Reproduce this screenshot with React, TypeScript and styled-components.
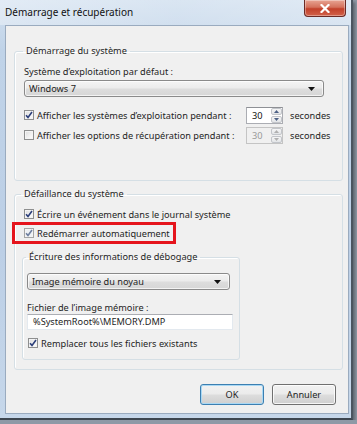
import React from 'react'
import styled, { createGlobalStyle } from 'styled-components'

const GlobalStyle = createGlobalStyle`
  html, body {
    margin: 0;
    padding: 0;
    background: #8e99a6;
  }
  body {
    font-family: "Noto Sans", "Open Sans", sans-serif;
    font-size: 9.2px;
    color: #1e1e1e;
  }
`

const Check = ({ checked, faded }: { checked?: boolean; faded?: boolean }) => (
  <CheckBox $faded={faded}>
    {checked && (
      <svg width="8" height="8" viewBox="0 0 8 8">
        <path d="M1 4.2 L3 6.4 L7 1" fill="none" stroke={faded ? '#6f7f9f' : '#2c3f7a'} strokeWidth="1.6" />
      </svg>
    )}
  </CheckBox>
)

const Spinner = ({ value, disabled }: { value: string; disabled?: boolean }) => (
  <SpinBox $disabled={disabled}>
    <SpinInput $disabled={disabled}>{value}</SpinInput>
    <SpinArrows>
      <SpinHalf>
        <svg width="5" height="3" viewBox="0 0 5 3"><path d="M0 3 L2.5 0 L5 3 Z" fill={disabled ? '#b0b0b0' : '#4d6185'} /></svg>
      </SpinHalf>
      <SpinHalf>
        <svg width="5" height="3" viewBox="0 0 5 3"><path d="M0 0 L2.5 3 L5 0 Z" fill={disabled ? '#b0b0b0' : '#4d6185'} /></svg>
      </SpinHalf>
    </SpinArrows>
  </SpinBox>
)

const Combo = ({ text, width }: { text: string; width: number }) => (
  <ComboBox style={{ width }}>
    <span>{text}</span>
    <svg width="7" height="4" viewBox="0 0 7 4"><path d="M0 0 L7 0 L3.5 4 Z" fill="#111" /></svg>
  </ComboBox>
)

export default function App() {
  return (
    <>
      <GlobalStyle />
      <Window>
        <TitleBar>
          <Title>Démarrage et récupération</Title>
          <CloseButton>
            <svg width="10" height="9" viewBox="0 0 10 9">
              <path d="M1.5 1 L8.5 8 M8.5 1 L1.5 8" stroke="#fff" strokeWidth="2.2" strokeLinecap="square" />
            </svg>
          </CloseButton>
        </TitleBar>
        <Client>
          <Group $pad="0 17px 36px 9px">
            <Legend>Démarrage du système</Legend>
            <Label $top={7}>Système d’exploitation par défaut :</Label>
            <Combo text="Windows 7" width={300} />
            <Row $top={9}>
              <Check checked />
              <RowText $w={209}>Afficher les systèmes d’exploitation pendant :</RowText>
              <Spinner value="30" />
              <Unit>secondes</Unit>
            </Row>
            <Row $top={2}>
              <Check />
              <RowText $w={209}>Afficher les options de récupération pendant :</RowText>
              <Spinner value="30" disabled />
              <Unit>secondes</Unit>
            </Row>
          </Group>

          <Group $pad="0 7px 9px 7px" $top={6}>
            <Legend>Défaillance du système</Legend>
            <Row $top={4} $left={2}>
              <Check checked />
              <RowText>Écrire un événement dans le journal système</RowText>
            </Row>
            <Highlight>
              <Row $top={0}>
                <Check checked faded />
                <RowText>Redémarrer automatiquement</RowText>
              </Row>
            </Highlight>
            <Group $pad="0 6px 7px 4px" $top={6}>
              <Legend>Écriture des informations de débogage</Legend>
              <ComboWrap>
                <Combo text="Image mémoire du noyau" width={203} />
              </ComboWrap>
              <Label $top={11}>Fichier de l’image mémoire :</Label>
              <TextInput>%SystemRoot%\MEMORY.DMP</TextInput>
              <Row $top={4} $left={1}>
                <Check checked />
                <RowText>Remplacer tous les fichiers existants</RowText>
              </Row>
            </Group>
          </Group>

          <ButtonBar>
            <Button $default>OK</Button>
            <Button>Annuler</Button>
          </ButtonBar>
        </Client>
      </Window>
    </>
  )
}

const Window = styled.div`
  width: 351px;
  height: 418px;
  display: flex;
  flex-direction: column;
  background: linear-gradient(180deg, #d3e1f0 0%, #c0d3e8 12%, #bccfe6 60%, #c6d7ea 100%);
  border-right: 2px solid #4b5560;
  border-bottom: 2px solid #3d4650;
  box-shadow: 2px 2px 3px rgba(0, 0, 0, 0.35);
`

const TitleBar = styled.div`
  height: 25px;
  display: flex;
  align-items: flex-start;
  justify-content: space-between;
  background: linear-gradient(90deg, rgba(255,255,255,0.35) 0%, rgba(255,255,255,0.15) 50%, rgba(255,255,255,0.3) 100%);
`

const Title = styled.div`
  margin: 5px 0 0 5px;
  font-size: 10px;
  line-height: 14px;
  color: #111;
  white-space: nowrap;
`

const CloseButton = styled.div`
  width: 40px;
  height: 16px;
  margin-right: 5px;
  display: flex;
  align-items: center;
  justify-content: center;
  border: 1px solid #6b2a25;
  border-top: none;
  border-radius: 0 0 4px 4px;
  background: linear-gradient(180deg, #e8a493 0%, #d4715c 45%, #c2402a 55%, #d2624a 100%);
  box-shadow: inset 0 0 0 1px rgba(255, 255, 255, 0.35);
`

const Client = styled.div`
  flex: 1;
  margin: 0 2px 4px 5px;
  display: flex;
  flex-direction: column;
  padding: 18px 5px 8px 8px;
  background: #f0f0f0;
  border: 1px solid #9aabbf;
`

const Group = styled.fieldset<{ $pad: string; $top?: number }>`
  margin: ${(p) => p.$top ?? 0}px 0 0 0;
  padding: ${(p) => p.$pad};
  display: flex;
  flex-direction: column;
  align-items: flex-start;
  border: 1px solid #d5dfe5;
  border-radius: 3px;
  box-shadow: inset 1px 1px 0 #fff;
  min-width: 0;
`

const Legend = styled.legend`
  padding: 0 3px;
  margin-left: -1px;
  line-height: 14px;
  white-space: nowrap;
`

const Label = styled.div<{ $top: number }>`
  margin-top: ${(p) => p.$top}px;
  line-height: 13px;
  height: 13px;
  white-space: nowrap;
`

const ComboWrap = styled.div`
  margin-top: 7px;
`

const ComboBox = styled.div`
  height: 17px;
  margin-top: 2px;
  box-sizing: border-box;
  display: flex;
  align-items: center;
  justify-content: space-between;
  padding: 0 8px 0 4px;
  border: 1px solid #8a8a8a;
  border-radius: 3px;
  background: linear-gradient(180deg, #f4f4f4 0%, #ebebeb 48%, #dddddd 52%, #d6d6d6 100%);
  box-shadow: inset 0 0 0 1px rgba(255, 255, 255, 0.7);
  white-space: nowrap;
`

const Row = styled.div<{ $top: number; $left?: number }>`
  margin-top: ${(p) => p.$top}px;
  margin-left: ${(p) => p.$left ?? 0}px;
  height: 18px;
  display: flex;
  align-items: center;
`

const CheckBox = styled.div<{ $faded?: boolean }>`
  width: 10px;
  height: 10px;
  flex: none;
  box-sizing: border-box;
  display: flex;
  align-items: center;
  justify-content: center;
  border: 1px solid ${(p) => (p.$faded ? '#a5a5a5' : '#8e8f8f')};
  background: ${(p) =>
    p.$faded ? '#eef1f4' : 'linear-gradient(135deg, #dcdcdc 0%, #f2f2f2 60%, #ffffff 100%)'};
  box-shadow: inset 0 0 0 1px #f4f4f4;
`

const RowText = styled.span<{ $w?: number }>`
  margin-left: 3px;
  line-height: 13px;
  white-space: nowrap;
  ${(p) => (p.$w ? `width: ${p.$w}px; flex: none;` : '')}
`

const SpinBox = styled.div<{ $disabled?: boolean }>`
  height: 17px;
  width: 37px;
  flex: none;
  box-sizing: border-box;
  display: flex;
  border: 1px solid ${(p) => (p.$disabled ? '#c4c4c4' : '#abadb3')};
  border-top-color: ${(p) => (p.$disabled ? '#c4c4c4' : '#8e9095')};
  background: ${(p) => (p.$disabled ? '#f0f0f0' : '#fff')};
`

const SpinInput = styled.div<{ $disabled?: boolean }>`
  flex: 1;
  padding-left: 5px;
  line-height: 15px;
  color: ${(p) => (p.$disabled ? '#9a9a9a' : '#111')};
`

const SpinArrows = styled.div`
  width: 11px;
  display: flex;
  flex-direction: column;
  gap: 1px;
`

const SpinHalf = styled.div`
  flex: 1;
  display: flex;
  align-items: center;
  justify-content: center;
  border: 1px solid #c2c5ca;
  border-radius: 2px;
  background: linear-gradient(180deg, #f6f6f6 0%, #e2e4e7 100%);
`

const Unit = styled.span`
  margin-left: 7px;
  line-height: 13px;
  white-space: nowrap;
`

const Highlight = styled.div`
  margin: -1px 0 0 -10px;
  padding: 0 3px 0 9px;
  border: 3px solid #e5141c;
  height: 16px;
  display: flex;
  align-items: center;
`

const TextInput = styled.div`
  margin-top: 0;
  width: 206px;
  height: 16px;
  box-sizing: border-box;
  padding-left: 5px;
  line-height: 14px;
  background: #fff;
  border: 1px solid #e3e9ef;
  border-top-color: #abadb3;
  white-space: nowrap;
`

const ButtonBar = styled.div`
  margin-top: 14px;
  margin-right: 7px;
  display: flex;
  justify-content: flex-end;
  gap: 8px;
`

const Button = styled.div<{ $default?: boolean }>`
  width: 64px;
  height: 21px;
  box-sizing: border-box;
  display: flex;
  align-items: center;
  justify-content: center;
  border: 1px solid ${(p) => (p.$default ? '#3c7fb1' : '#707070')};
  border-radius: 3px;
  background: linear-gradient(180deg, #f2f2f2 0%, #ebebeb 48%, #dddddd 52%, #cfcfcf 100%);
  box-shadow: inset 0 0 0 1px ${(p) => (p.$default ? '#a9d8f4' : 'rgba(255,255,255,0.8)')};
`
